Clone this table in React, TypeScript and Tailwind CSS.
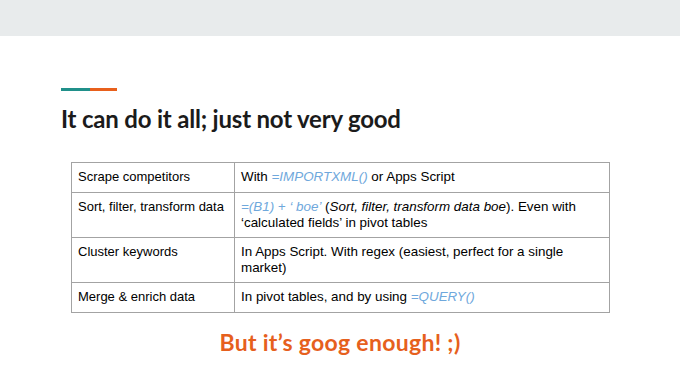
const code = 'text-[#6fa8dc] italic';

const rows: { label: string; body: React.ReactNode; h: string }[] = [
  {
    label: 'Scrape competitors',
    h: 'h-[30px]',
    body: (
      <>
        With <span className={code}>=IMPORTXML()</span> or Apps Script
      </>
    ),
  },
  {
    label: 'Sort, filter, transform data',
    h: 'h-[45px]',
    body: (
      <>
        <span className={code}>=(B1) + ‘ boe’</span> (<span className="italic">Sort, filter, transform data boe</span>). Even with
        ‘calculated fields’ in pivot tables
      </>
    ),
  },
  {
    label: 'Cluster keywords',
    h: 'h-[45px]',
    body: <>In Apps Script. With regex (easiest, perfect for a single market)</>,
  },
  {
    label: 'Merge & enrich data',
    h: 'h-[30px]',
    body: (
      <>
        In pivot tables, and by using <span className={code}>=QUERY()</span>
      </>
    ),
  },
];

export default function App() {
  return (
    <div className="w-[680px] h-[382px] bg-white flex flex-col overflow-hidden">
      <div className="h-[36px] bg-[#e8ebec] shrink-0" />

      <div className="pl-[61px] pt-[52px] flex">
        <div className="w-[29px] h-[3px] bg-[#20908a]" />
        <div className="w-[27px] h-[3px] bg-[#e8601c]" />
      </div>

      <h1 className="pl-[61px] mt-[14px] text-[24px] leading-[28px] font-bold text-[#1b1b1b] font-['Lato',sans-serif] tracking-[-0.2px]">
        It can do it all; just not very good
      </h1>

      <table className="ml-[71px] mt-[29px] w-[539px] border-collapse font-['Liberation_Sans',Arial,sans-serif] text-[13px] leading-[16px] text-black">
        <tbody>
          {rows.map((r) => (
            <tr key={r.label} className={r.h}>
              <td className="w-[163px] border border-[#a3a3a3] px-[6px] pt-[6px] align-top">{r.label}</td>
              <td className="border border-[#a3a3a3] px-[6px] pt-[6px] pr-[20px] align-top text-[13.4px]">{r.body}</td>
            </tr>
          ))}
        </tbody>
      </table>

      <p className="mt-[15px] text-center text-[23px] leading-[28px] font-bold text-[#e6601d] font-['Lato',sans-serif] tracking-[0.3px]">
        But it’s goog enough! ;)
      </p>
    </div>
  );
}
